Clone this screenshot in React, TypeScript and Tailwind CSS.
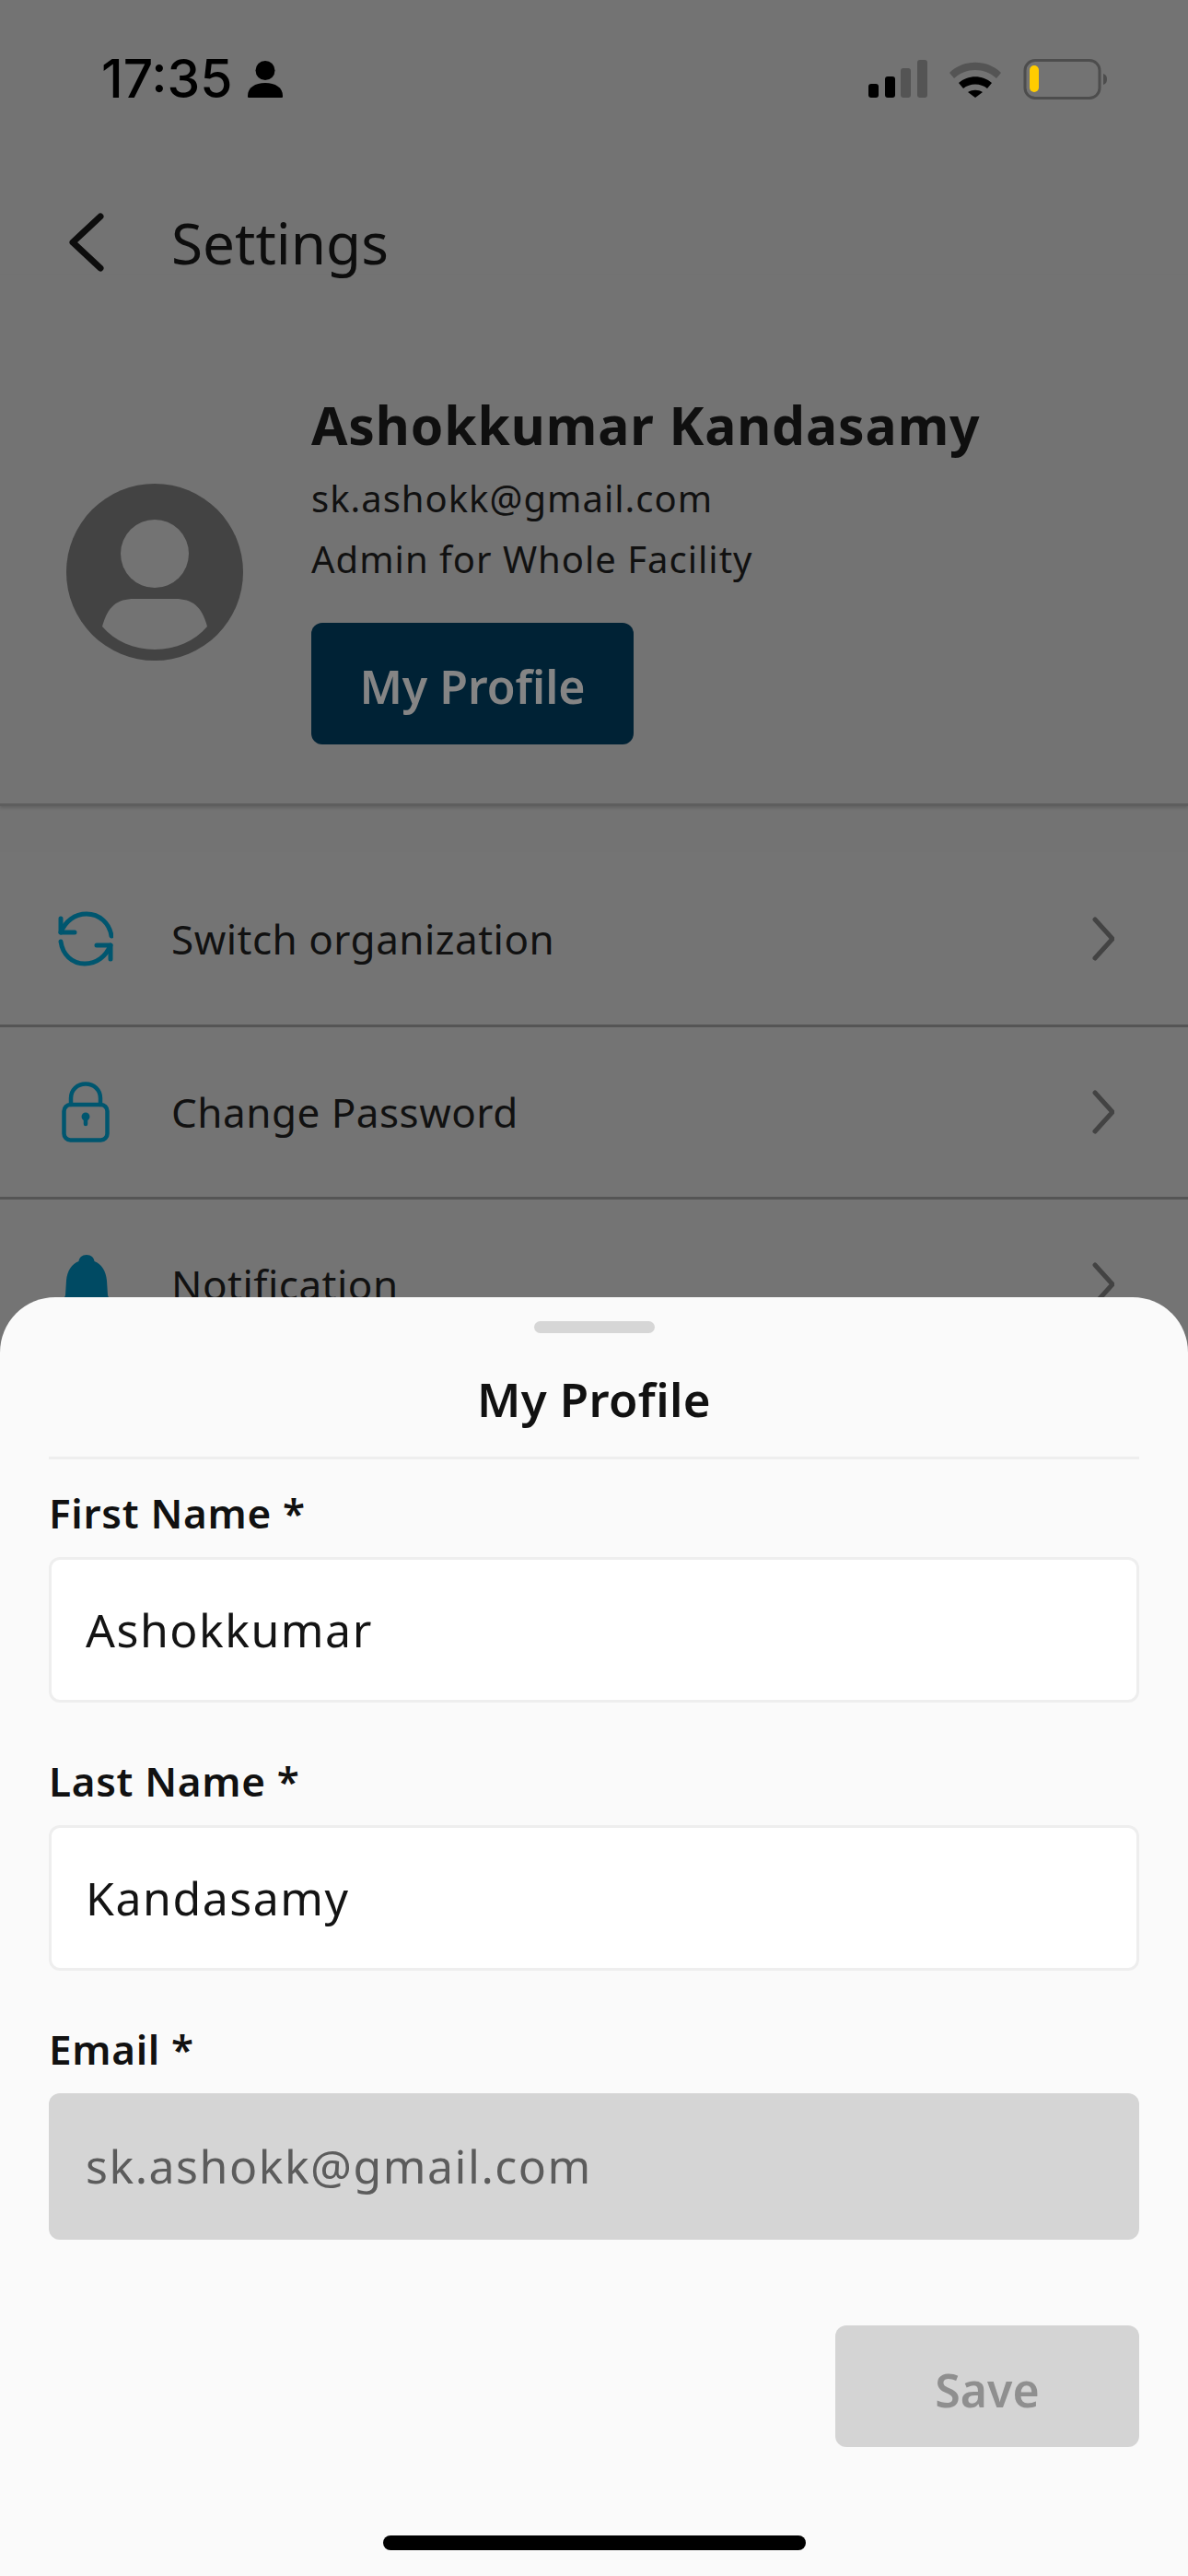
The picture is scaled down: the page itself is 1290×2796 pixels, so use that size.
const font = "font-['Noto_Sans',sans-serif]";

const rows = [
  { label: "Switch organization", icon: <SyncIcon /> },
  { label: "Change Password", icon: <LockIcon /> },
  { label: "Notification", icon: <BellIcon /> },
];

function SyncIcon() {
  return (
    <svg width="60" height="60" viewBox="0 0 60 60" fill="none" stroke="#00566f" strokeWidth="5" strokeLinecap="round" strokeLinejoin="round">
      <path d="M3 8v15h15" />
      <path d="M3 23C8 11 18 3 31 3c14 0 25 10 27 24" />
      <path d="M57 52V37H42" />
      <path d="M57 37C52 49 42 57 29 57 15 57 5 47 3 33" />
    </svg>
  );
}

function LockIcon() {
  return (
    <svg width="52" height="66" viewBox="0 0 52 66" fill="none" stroke="#00566f" strokeWidth="4.5" strokeLinecap="round" strokeLinejoin="round" className="ml-[4px]">
      <rect x="2.5" y="25" width="47" height="38.5" rx="7" />
      <path d="M10 25V18C10 9 17 2.5 26 2.5S42 9 42 18v7" />
      <circle cx="26" cy="38" r="2.2" fill="#00566f" />
      <path d="M26 39v7" />
    </svg>
  );
}

function BellIcon() {
  return (
    <svg width="56" height="64" viewBox="0 0 56 64" fill="#004a63" className="ml-[3px]">
      <path d="M28 0c5 0 8 3 8.500 7C44 10 49 17 50 28l1 16c1 3 3 4 5 6H0c2-2 4-3 5-6l1-16C7 17 12 10 19.500 7 20 3 23 0 28 0z" />
    </svg>
  );
}

function Chevron() {
  return (
    <svg width="24" height="48" viewBox="0 0 24 48" fill="none" stroke="#434343" strokeWidth="5" strokeLinecap="round" strokeLinejoin="round">
      <path d="M3 3l19 21L3 45" />
    </svg>
  );
}

function StatusIcons() {
  return (
    <svg width="260" height="44" viewBox="0 0 260 44" className="block">
      <rect x="0" y="27" width="11" height="15" rx="3" fill="#000" />
      <rect x="18" y="19" width="11" height="23" rx="3" fill="#000" />
      <rect x="35" y="10" width="11" height="32" rx="3" fill="#545454" />
      <rect x="53" y="1" width="11" height="41" rx="3" fill="#545454" />
      <path d="M88 15C103 0 129 0 144 15l-5 6C126 9 106 9 93 21z" fill="#545454" />
      <path d="M98 26c10-9 26-9 36 0l-5 6c-7-6-19-6-26 0z" fill="#000" />
      <path d="M108 36c5-3 11-3 16 0l-8 6z" fill="#000" />
      <rect x="170" y="1.500" width="81" height="41" rx="11" fill="none" stroke="#4d4d4d" strokeWidth="3" />
      <rect x="175" y="7" width="10" height="29" rx="5" fill="#ffcc00" />
      <path d="M255 16c3 1 4 3 4 6s-1 5-4 6z" fill="#4d4d4d" />
    </svg>
  );
}

function Field({ label, value, disabled }: { label: string; value: string; disabled?: boolean }) {
  return (
    <div className="flex flex-col">
      <div className="h-[48px] text-[44px] leading-[48px] font-semibold text-[#111] tracking-[0.7px]">{label}</div>
      <div
        className={
          disabled
            ? "mt-[24px] h-[159px] flex items-center px-[40px] rounded-[12px] bg-[#d5d5d5] text-[#5c5c5c] text-[50px] tracking-[1.500px]"
            : "mt-[24px] h-[158px] flex items-center px-[37px] rounded-[12px] bg-white border-[3px] border-[#eeeeee] text-[#141414] text-[50px] tracking-[1.500px]"
        }
      >
        {value}
      </div>
    </div>
  );
}

export default function App() {
  return (
    <div className={`relative w-[1290px] h-[2796px] overflow-hidden bg-[#737373] ${font}`}>
      {/* Status bar */}
      <div className="flex justify-between items-center pt-[64px] pl-[110px] pr-[87px] h-[108px]">
        <div className="flex items-center gap-[16px]">
          <span className="font-['Inter',sans-serif] font-medium text-[57px] leading-[44px] text-black">17:35</span>
          <svg width="38" height="40" viewBox="0 0 38 40" fill="#000">
            <ellipse cx="19" cy="10.500" rx="10.500" ry="10.500" />
            <path d="M1 40c-1 0-1-1-1-2 0-9 8-14 19-14s19 5 19 14c0 1 0 2-1 2z" />
          </svg>
        </div>
        <StatusIcons />
      </div>

      {/* Header */}
      <div className="flex items-center pl-[75px] mt-[120px] h-[70px]">
        <svg width="38" height="64" viewBox="0 0 38 64" fill="none" stroke="#0d0d0d" strokeWidth="7" strokeLinecap="round" strokeLinejoin="round">
          <path d="M34 4L4 32l30 28" />
        </svg>
        <span className="ml-[73px] text-[62px] leading-[70px] text-[#0d0d0d]">Settings</span>
      </div>

      {/* Profile */}
      <div className="h-[577px] pt-[130px] flex items-start border-b-[3px] border-[#5e5e5e] shadow-[0_2px_3px_rgba(0,0,0,0.15)] pl-[72px]">
        <svg width="192" height="192" viewBox="0 0 192 192" className="mt-[97px] shrink-0">
          <circle cx="96" cy="96" r="96" fill="#434343" />
          <circle cx="96" cy="76" r="37" fill="#737373" />
          <path d="M39 155c6-22 16-30 35-30h44c19 0 29 8 35 30-14 16-34 25-57 25s-43-9-57-25z" fill="#737373" />
        </svg>
        <div className="ml-[74px] -mt-[2px] flex flex-col">
          <div className="text-[57px] leading-[70px] font-bold tracking-[0.9px] text-[#0f0f0f]">Ashokkumar Kandasamy</div>
          <div className="mt-[20px] text-[40px] leading-[50px] tracking-[1px] text-[#111]">sk.ashokk@gmail.com</div>
          <div className="mt-[16px] text-[40px] leading-[50px] tracking-[1px] text-[#111]">Admin for Whole Facility</div>
          <div className="mt-[44px] w-[350px] h-[132px] pt-[7px] rounded-[12px] bg-[#002235] flex items-center justify-center text-[50px] font-semibold text-[#858585]">
            My Profile
          </div>
        </div>
      </div>

      {/* Menu rows */}
      <div className="mt-[50px] bg-[#747474]">
        {rows.map((row) => (
          <div key={row.label} className="h-[187px] flex items-center border-b-[3px] border-[#555555] pl-[63px] pr-[80px] first:h-[190px]">
            <div className="w-[123px] shrink-0 flex">{row.icon}</div>
            <span className="text-[44px] tracking-[0.5px] text-[#111]">{row.label}</span>
            <div className="ml-auto">
              <Chevron />
            </div>
          </div>
        ))}
      </div>

      {/* Bottom sheet */}
      <div className="absolute left-0 right-0 bottom-0 h-[1388px] rounded-t-[60px] bg-[#fafafa] flex flex-col px-[53px]">
        <div className="mt-[26px] mx-auto w-[131px] h-[13px] rounded-full bg-[#d6d6d6]" />
        <div className="mt-[36px] h-[70px] text-center text-[51px] leading-[70px] font-semibold tracking-[0.4px] text-[#111]">My Profile</div>
        <div className="mt-[28px] h-[3px] bg-[#eeeeee]" />
        <div className="mt-[34px] flex flex-col gap-[61px]">
          <Field label="First Name *" value="Ashokkumar" />
          <Field label="Last Name *" value="Kandasamy" />
          <Field label="Email *" value="sk.ashokk@gmail.com" disabled />
        </div>
        <div className="mt-[93px] self-end w-[330px] h-[132px] pt-[8px] rounded-[12px] bg-[#d4d4d4] flex items-center justify-center text-[50px] font-semibold text-[#8f8f8f]">
          Save
        </div>
        <div className="mt-[96px] mx-auto w-[459px] h-[16px] rounded-full bg-black" />
      </div>
    </div>
  );
}
